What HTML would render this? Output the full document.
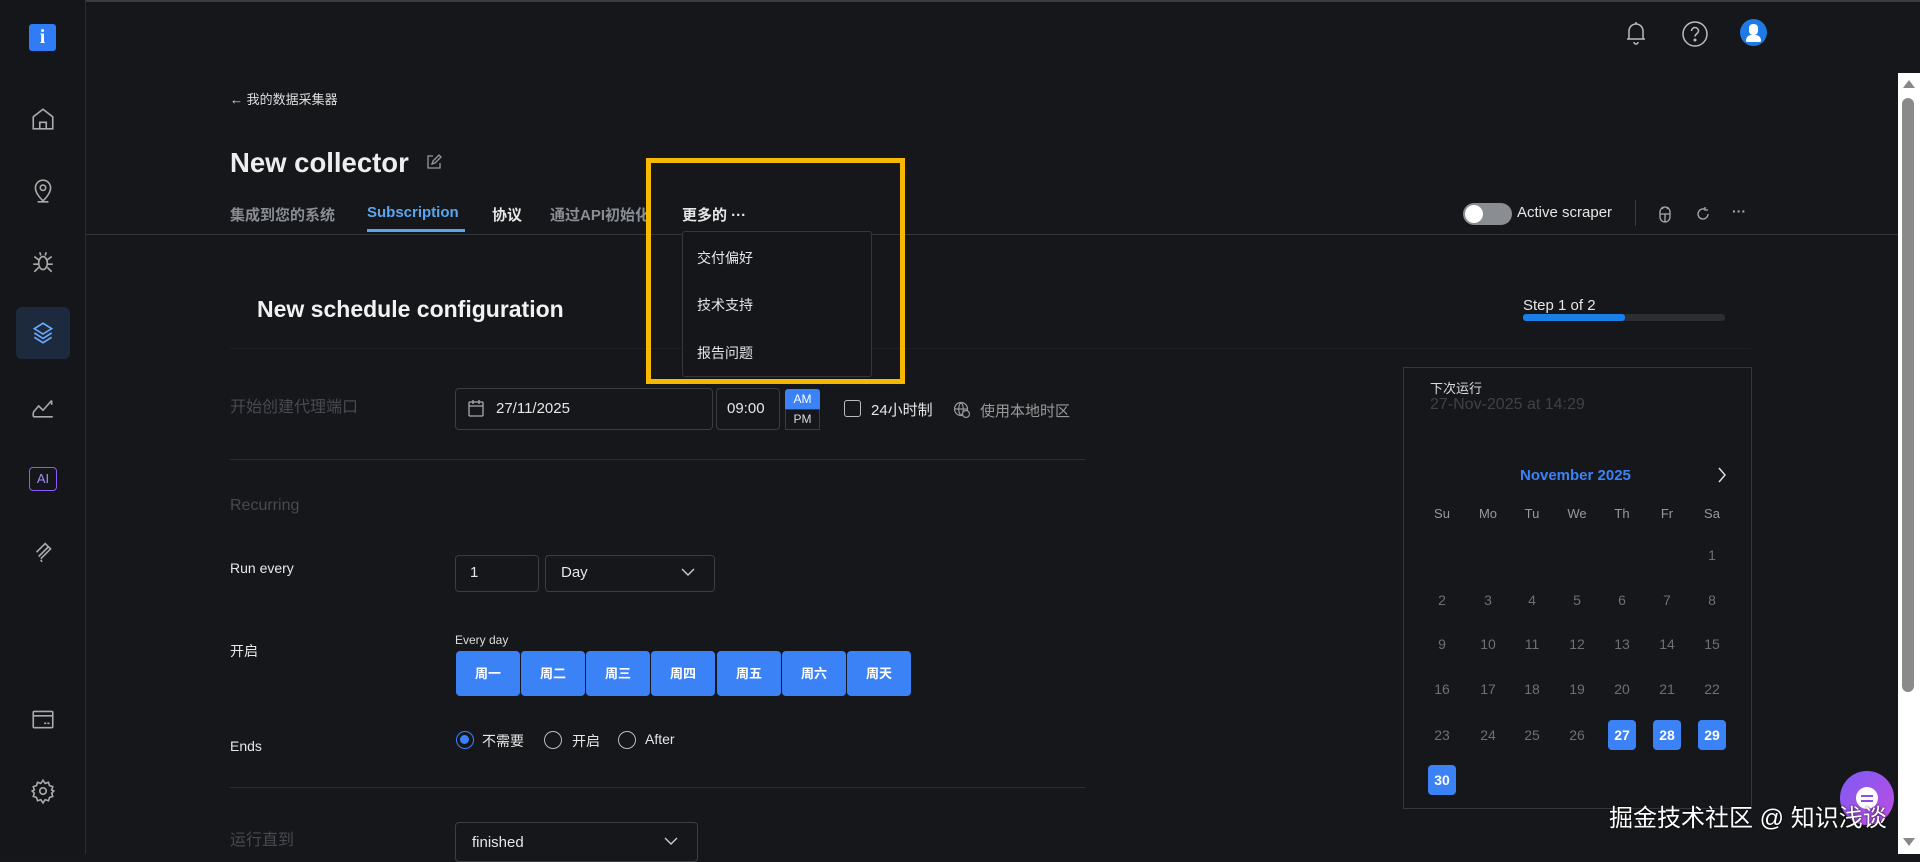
<!DOCTYPE html>
<html><head><meta charset="utf-8"><style>
*{box-sizing:border-box;margin:0;padding:0}
body{width:1920px;height:854px;background:#15171a;overflow:hidden;position:relative;font-family:"Liberation Sans","Noto Sans CJK SC",sans-serif;color:#e6e6e6}
.a{position:absolute;white-space:nowrap}
.side{position:absolute;left:0;top:0;width:86px;height:854px;border-right:1px solid #2a2d31;background:#141619}
.ic{position:absolute;left:30px;width:26px;height:26px}
.tab{position:absolute;top:204px;font-size:15px;font-weight:bold;color:#8a8e94}
.dim{color:#464a50}
.lbl{font-size:14px;color:#e8e8e8}
.box{position:absolute;border:1px solid #3a3d42;border-radius:4px;background:#15171a}
.day{position:absolute;top:651px;width:64px;height:45px;background:#3b82f6;border-radius:4px;color:#fff;font-size:13px;text-align:center;line-height:45px;font-weight:bold}
.cal{position:absolute;font-size:14px;color:#6b7075;width:30px;text-align:center}
.hl{background:#3b82f6;color:#fff;border-radius:4px;font-weight:bold;height:30px;line-height:30px;width:28px;margin-left:1px}
.radio{position:absolute;width:18px;height:18px;border:1.5px solid #bbb;border-radius:50%}
</style></head><body>
<div class="a" style="left:0;top:0;width:1920px;height:2px;background:#3a3d42"></div>
<div class="side">
 <div class="a" style="left:29px;top:24px;width:27px;height:27px;background:#2f7cf6;border-radius:3px;color:#fff;font-weight:bold;font-size:20px;text-align:center;line-height:27px;font-family:'Liberation Serif',serif">i</div>
 <svg class="ic" style="top:106px" viewBox="0 0 24 24" fill="none" stroke="#aaa" stroke-width="1.5"><path d="M3 21V10L12 3l9 7v11H3zM9 21v-6h6v6"/></svg>
 <svg class="ic" style="top:178px" viewBox="0 0 24 24" fill="none" stroke="#aaa" stroke-width="1.5"><path d="M12 21s-7-6-7-12a7 7 0 0114 0c0 6-7 12-7 12z"/><circle cx="12" cy="9" r="2.5"/><path d="M7 22h10"/></svg>
 <svg class="ic" style="top:249px" viewBox="0 0 24 24" fill="none" stroke="#aaa" stroke-width="1.5"><ellipse cx="12" cy="13" rx="4" ry="6"/><path d="M8 10L4 7M8 14H3M8 17l-4 4M16 10l4-3M16 14h5M16 17l4 4M10 6L9 3M14 6l1-3"/></svg>
 <div class="a" style="left:16px;top:307px;width:54px;height:52px;background:#1d2a3d;border-radius:6px"></div>
 <svg class="ic" style="top:320px" viewBox="0 0 24 24" fill="none" stroke="#6aa8ff" stroke-width="1.5"><path d="M12 3l8 5-8 5-8-5 8-5zM4 12l8 5 8-5M4 16l8 5 8-5"/></svg>
 <svg class="ic" style="top:394px" viewBox="0 0 24 24" fill="none" stroke="#aaa" stroke-width="1.5"><path d="M3 21h18M3 17l5-6 4 4 8-9M3 21v-4M20 6v4"/></svg>
 <div class="a" style="left:29px;top:467px;width:28px;height:24px;border:1.5px solid #8b5cf6;border-radius:4px;color:#a78bfa;font-size:13px;text-align:center;line-height:21px">AI</div>
 <svg class="ic" style="top:537px" viewBox="0 0 24 24" fill="none" stroke="#aaa" stroke-width="1.5"><path d="M6 14l8-8 3 3-8 8M8 18l9-9 2 2-9 9M10 21l1 2"/></svg>
 <svg class="ic" style="top:706px" viewBox="0 0 24 24" fill="none" stroke="#aaa" stroke-width="1.5"><rect x="3" y="5" width="18" height="15" rx="1"/><path d="M3 9h18M13 16h2M16 16h2"/></svg>
 <svg class="ic" style="top:778px" viewBox="0 0 24 24" fill="none" stroke="#aaa" stroke-width="1.5"><circle cx="12" cy="12" r="3"/><path d="M12 2l2 3 3-1 1 3 3 1-1 3 2 1-2 2 1 3-3 1-1 3-3-1-2 3-2-3-3 1-1-3-3-1 1-3-2-2 2-1-1-3 3-1 1-3 3 1z"/></svg>
</div>
<svg class="a" style="left:1624px;top:20px" width="24" height="26" viewBox="0 0 24 26" fill="none" stroke="#bbb" stroke-width="1.5"><path d="M5 19V11a7 7 0 0114 0v8h2H3h2zM10 22a2 2 0 004 0M12 2v2"/></svg>
<svg class="a" style="left:1681px;top:20px" width="28" height="28" viewBox="0 0 28 28" fill="none" stroke="#bbb" stroke-width="1.5"><circle cx="14" cy="14" r="12"/><path d="M10.5 11a3.5 3.5 0 117 0c0 2.5-3.5 3-3.5 5.5"/><circle cx="14" cy="20" r=".8" fill="#bbb"/></svg>
<div class="a" style="left:1740px;top:19px;width:27px;height:27px;border-radius:50%;background:#1e7be6"><div class="a" style="left:9px;top:5px;width:9px;height:11px;border-radius:4px;background:#fff"></div><div class="a" style="left:6px;top:16px;width:15px;height:7px;border-radius:7px 7px 2px 2px;background:#fff"></div></div>
<div class="a" style="left:230px;top:89px;font-size:13px;color:#ddd">← 我的数据采集器</div>
<div class="a" style="left:230px;top:147px;font-size:27.5px;font-weight:bold;color:#eee">New collector</div>
<svg class="a" style="left:426px;top:154px" width="16" height="16" viewBox="0 0 16 16" fill="none" stroke="#999" stroke-width="1.3"><path d="M7 2H2v12h12V9M6 10l1-3 6-6 2 2-6 6z"/></svg>
<div class="tab" style="left:230px">集成到您的系统</div>
<div class="tab" style="left:367px;color:#5aa6f0">Subscription</div>
<div class="a" style="left:367px;top:229px;width:98px;height:3px;background:#5aa6f0"></div>
<div class="tab" style="left:492px;color:#e6e6e6">协议</div>
<div class="tab" style="left:550px">通过API初始化</div>
<div class="tab" style="left:682px;color:#e6e6e6">更多的 ···</div>
<div class="a" style="left:86px;top:234px;width:1812px;height:1px;background:#34373b"></div>
<div class="a" style="left:1463px;top:203px;width:49px;height:22px;border-radius:11px;background:#8a8d91"><div class="a" style="left:2px;top:2px;width:18px;height:18px;border-radius:50%;background:#fff"></div></div>
<div class="a" style="left:1517px;top:204px;font-size:15px;color:#e6e6e6">Active scraper</div>
<div class="a" style="left:1635px;top:200px;width:1px;height:26px;background:#3a3d42"></div>
<svg class="a" style="left:1657px;top:205px" width="16" height="18" viewBox="0 0 16 18" fill="none" stroke="#aaa" stroke-width="1.3"><path d="M3 7a5 5 0 0110 0v5a5 5 0 01-10 0zM3 9h10M8 9v8M5 2l1 2M11 2l-1 2"/></svg>
<svg class="a" style="left:1695px;top:206px" width="16" height="16" viewBox="0 0 16 16" fill="none" stroke="#aaa" stroke-width="1.3"><path d="M13 8a5 5 0 11-3-4.6M10 1v3h3"/></svg>
<div class="a" style="left:1732px;top:203px;font-size:14px;color:#aaa;font-weight:bold">···</div>
<div class="a" style="left:257px;top:296px;font-size:23px;font-weight:bold;color:#f2f2f2">New schedule configuration</div>
<div class="a" style="left:1523px;top:297px;font-size:15px;color:#e6e6e6">Step 1 of 2</div>
<div class="a" style="left:1523px;top:314px;width:202px;height:7px;background:#2b2e32;border-radius:3px"><div style="width:102px;height:7px;background:#1a7fe8;border-radius:3px"></div></div>
<div class="a" style="left:230px;top:348px;width:1521px;height:1px;background:#1e2124"></div>
<div class="a dim" style="left:230px;top:393px;font-size:16px">开始创建代理端口</div>
<div class="box" style="left:455px;top:388px;width:258px;height:42px"></div>
<svg class="a" style="left:468px;top:398px" width="16" height="20" viewBox="0 0 16 20" fill="none" stroke="#aaa" stroke-width="1.3"><rect x="1" y="4" width="14" height="14" rx="1"/><path d="M1 8h14M5 2v4M11 2v4"/></svg>
<div class="a" style="left:496px;top:400px;font-size:15px;color:#e6e6e6">27/11/2025</div>
<div class="box" style="left:716px;top:388px;width:64px;height:42px"></div>
<div class="a" style="left:727px;top:400px;font-size:15px;color:#e6e6e6">09:00</div>
<div class="a" style="left:785px;top:389px;width:35px;height:20px;background:#3b82f6;border-radius:3px 3px 0 0;color:#fff;font-size:12px;text-align:center;line-height:20px">AM</div>
<div class="a" style="left:785px;top:409px;width:35px;height:21px;border:1px solid #3a3d42;color:#ddd;font-size:12px;text-align:center;line-height:19px">PM</div>
<div class="a" style="left:844px;top:400px;width:17px;height:17px;border:1.5px solid #bbb;border-radius:3px"></div>
<div class="a" style="left:871px;top:399px;font-size:15px;color:#e6e6e6">24小时制</div>
<svg class="a" style="left:953px;top:401px" width="18" height="18" viewBox="0 0 18 18" fill="none" stroke="#999" stroke-width="1.2"><circle cx="8" cy="8" r="6.5"/><path d="M1.5 8h13M8 1.5c-3 3-3 10 0 13M8 1.5c3 3 3 10 0 13"/><circle cx="13" cy="13" r="3.5" fill="#15171a"/></svg>
<div class="a" style="left:980px;top:400px;font-size:15px;color:#999">使用本地时区</div>
<div class="a" style="left:230px;top:459px;width:855px;height:1px;background:#2a2d31"></div>
<div class="a dim" style="left:230px;top:497px;font-size:16px">Recurring</div>
<div class="a lbl" style="left:230px;top:560px">Run every</div>
<div class="box" style="left:455px;top:555px;width:84px;height:37px"></div>
<div class="a" style="left:470px;top:564px;font-size:15px">1</div>
<div class="box" style="left:545px;top:555px;width:170px;height:37px"></div>
<div class="a" style="left:561px;top:564px;font-size:15px">Day</div>
<svg class="a" style="left:681px;top:567px" width="14" height="10" viewBox="0 0 14 10" fill="none" stroke="#ccc" stroke-width="1.4"><path d="M1 2l6 6 6-6"/></svg>
<div class="a lbl" style="left:230px;top:641px">开启</div>
<div class="a" style="left:455px;top:633px;font-size:12px;color:#ddd">Every day</div>
<div class="day" style="left:456px">周一</div><div class="day" style="left:521px">周二</div><div class="day" style="left:586px">周三</div><div class="day" style="left:651px">周四</div><div class="day" style="left:717px">周五</div><div class="day" style="left:782px">周六</div><div class="day" style="left:847px">周天</div>
<div class="a lbl" style="left:230px;top:738px">Ends</div>
<div class="radio" style="left:456px;top:731px;border-color:#3b82f6"><div style="margin:3px;width:9px;height:9px;border-radius:50%;background:#3b82f6"></div></div>
<div class="a" style="left:482px;top:731px;font-size:14px">不需要</div>
<div class="radio" style="left:544px;top:731px"></div>
<div class="a" style="left:572px;top:731px;font-size:14px">开启</div>
<div class="radio" style="left:618px;top:731px"></div>
<div class="a" style="left:645px;top:731px;font-size:14px">After</div>
<div class="a" style="left:230px;top:787px;width:855px;height:1px;background:#2a2d31"></div>
<div class="a dim" style="left:230px;top:826px;font-size:16px">运行直到</div>
<div class="box" style="left:455px;top:822px;width:243px;height:40px"></div>
<div class="a" style="left:472px;top:834px;font-size:15px">finished</div>
<svg class="a" style="left:664px;top:836px" width="14" height="10" viewBox="0 0 14 10" fill="none" stroke="#ccc" stroke-width="1.4"><path d="M1 2l6 6 6-6"/></svg>
<div class="a" style="left:1403px;top:367px;width:349px;height:442px;border:1px solid #34373b"></div>
<div class="a" style="left:1430px;top:378px;font-size:13px;color:#ddd">下次运行</div>
<div class="a" style="left:1430px;top:396px;font-size:16px;color:#3e4247">27-Nov-2025 at 14:29</div>
<div class="a" style="left:1520px;top:467px;font-size:15px;color:#3b82f6;font-weight:bold">November 2025</div>
<svg class="a" style="left:1717px;top:466px" width="10" height="18" viewBox="0 0 10 18" fill="none" stroke="#ddd" stroke-width="1.5"><path d="M2 2l6 7-6 7"/></svg>
<div class="cal" style="left:1427px;top:506px;font-size:13px;color:#999">Su</div><div class="cal" style="left:1473px;top:506px;font-size:13px;color:#999">Mo</div><div class="cal" style="left:1517px;top:506px;font-size:13px;color:#999">Tu</div><div class="cal" style="left:1562px;top:506px;font-size:13px;color:#999">We</div><div class="cal" style="left:1607px;top:506px;font-size:13px;color:#999">Th</div><div class="cal" style="left:1652px;top:506px;font-size:13px;color:#999">Fr</div><div class="cal" style="left:1697px;top:506px;font-size:13px;color:#999">Sa</div>
<div class="cal" style="left:1697px;top:547px">1</div>
<div class="cal" style="left:1427px;top:592px">2</div><div class="cal" style="left:1473px;top:592px">3</div><div class="cal" style="left:1517px;top:592px">4</div><div class="cal" style="left:1562px;top:592px">5</div><div class="cal" style="left:1607px;top:592px">6</div><div class="cal" style="left:1652px;top:592px">7</div><div class="cal" style="left:1697px;top:592px">8</div>
<div class="cal" style="left:1427px;top:636px">9</div><div class="cal" style="left:1473px;top:636px">10</div><div class="cal" style="left:1517px;top:636px">11</div><div class="cal" style="left:1562px;top:636px">12</div><div class="cal" style="left:1607px;top:636px">13</div><div class="cal" style="left:1652px;top:636px">14</div><div class="cal" style="left:1697px;top:636px">15</div>
<div class="cal" style="left:1427px;top:681px">16</div><div class="cal" style="left:1473px;top:681px">17</div><div class="cal" style="left:1517px;top:681px">18</div><div class="cal" style="left:1562px;top:681px">19</div><div class="cal" style="left:1607px;top:681px">20</div><div class="cal" style="left:1652px;top:681px">21</div><div class="cal" style="left:1697px;top:681px">22</div>
<div class="cal" style="left:1427px;top:727px">23</div><div class="cal" style="left:1473px;top:727px">24</div><div class="cal" style="left:1517px;top:727px">25</div><div class="cal" style="left:1562px;top:727px">26</div>
<div class="cal hl" style="left:1607px;top:720px">27</div><div class="cal hl" style="left:1652px;top:720px">28</div><div class="cal hl" style="left:1697px;top:720px">29</div>
<div class="cal hl" style="left:1427px;top:765px">30</div>
<div class="a" style="left:682px;top:231px;width:190px;height:146px;border:1px solid #34373b;border-radius:3px;background:#141619"></div>
<div class="a" style="left:697px;top:248px;font-size:14px;color:#e6e6e6">交付偏好</div>
<div class="a" style="left:697px;top:295px;font-size:14px;color:#e6e6e6">技术支持</div>
<div class="a" style="left:697px;top:343px;font-size:14px;color:#e6e6e6">报告问题</div>
<div class="a" style="left:646px;top:158px;width:259px;height:226px;border:5px solid #f7b900"></div>
<div class="a" style="left:1898px;top:73px;width:22px;height:781px;background:#fff"></div>
<div class="a" style="left:1903px;top:80px;width:0;height:0;border-left:6px solid transparent;border-right:6px solid transparent;border-bottom:8px solid #888"></div>
<div class="a" style="left:1902px;top:98px;width:12px;height:594px;border-radius:6px;background:#8a8a8a"></div>
<div class="a" style="left:1903px;top:838px;width:0;height:0;border-left:6px solid transparent;border-right:6px solid transparent;border-top:8px solid #888"></div>
<div class="a" style="left:1840px;top:771px;width:54px;height:54px;border-radius:50%;background:linear-gradient(135deg,#7c5cf5,#c04be0)"><div class="a" style="left:16px;top:16px;width:22px;height:22px;border-radius:50%;background:#fff"></div><div class="a" style="left:21px;top:24px;width:12px;height:2px;background:#8a4fe8"></div><div class="a" style="left:21px;top:29px;width:12px;height:2px;background:#8a4fe8"></div></div>
<div class="a" style="left:1609px;top:798px;font-size:24px;color:#fff;text-shadow:0 0 2px #000">掘金技术社区 @ 知识浅谈</div>
</body></html>
